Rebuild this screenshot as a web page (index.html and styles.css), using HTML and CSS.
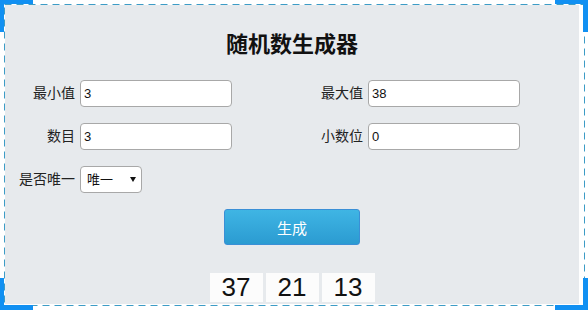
FILE: index.html
```html
<!DOCTYPE html>
<html>
  <head>
    <meta charset="utf-8">
    <title>随机数生成器</title>
    <link rel="stylesheet" href="styles.css">
  </head>
  <body>
    <div class="stage">
      <div class="panel">
        <h1 class="title">随机数生成器</h1>

        <div class="fields">
          <label class="field">
            <span class="field-label">最小值</span>
            <input class="field-input" value="3">
          </label>
          <label class="field">
            <span class="field-label">最大值</span>
            <input class="field-input" value="38">
          </label>
          <label class="field">
            <span class="field-label">数目</span>
            <input class="field-input" value="3">
          </label>
          <label class="field">
            <span class="field-label">小数位</span>
            <input class="field-input" value="0">
          </label>
          <label class="field">
            <span class="field-label">是否唯一</span>
            <span class="select-wrap">
              <select class="field-select">
                <option>唯一</option>
                <option>不唯一</option>
              </select>
            </span>
          </label>
        </div>

        <button class="generate">生成</button>

        <div class="results">
          <span class="result">37</span>
          <span class="result">21</span>
          <span class="result">13</span>
        </div>
      </div>

      <!-- selection frame drawn over the panel -->
      <svg class="outline" width="588" height="310">
        <rect x="4.5" y="4.5" width="580" height="301" fill="none" stroke="#3d9cc6" stroke-width="1" stroke-dasharray="7 5"/>
      </svg>
      <span class="corner corner-tl"></span>
      <span class="corner corner-tr"></span>
      <span class="corner corner-bl"></span>
      <span class="corner corner-br"></span>
    </div>
  </body>
</html>
```

FILE: styles.css
```css
body { margin: 0; background: #fff; font-family: "Liberation Sans", "Noto Sans CJK SC", sans-serif; color: #222; }

.stage { position: relative; width: 588px; height: 310px; box-sizing: border-box; padding: 5px 9px 6px 5px; }
.panel { height: 100%; background: #e7eaed; display: flex; flex-direction: column; }

.title { margin: 0; padding-top: 27px; font-size: 22px; line-height: 26px; font-weight: bold; text-align: center; color: #111; }

.fields { margin-top: 22px; display: grid; grid-template-columns: 288px 1fr; row-gap: 16px; }
.field { display: flex; align-items: center; gap: 5px; }
.field-label { width: 70px; text-align: right; font-size: 14px; line-height: 27px; }
.field-input { width: 152px; height: 27px; box-sizing: border-box; border: 1px solid #a8a8a8; border-radius: 4px; padding: 0 3px; font: 13px "Liberation Sans", "Noto Sans CJK SC", sans-serif; color: #111; background: #fff; }
.field-input:focus { outline: none; }

.select-wrap { position: relative; display: block; width: 62px; height: 27px; }
.select-wrap::after { content: ""; position: absolute; right: 6px; top: 11px; border-left: 3px solid transparent; border-right: 3px solid transparent; border-top: 5px solid #111; pointer-events: none; }
.field-select { appearance: none; -webkit-appearance: none; width: 100%; height: 100%; box-sizing: border-box; border: 1px solid #a8a8a8; border-radius: 4px; padding: 0 0 0 6px; background: #fff; font: 13px "Liberation Sans", "Noto Sans CJK SC", sans-serif; color: #111; }

.generate { align-self: center; margin-top: 16px; width: 136px; height: 36px; border: 1px solid #3a8fd6; border-radius: 3px; background: linear-gradient(#3fb5e4, #2b9bd1); color: #fff; font: 15px "Liberation Sans", "Noto Sans CJK SC", sans-serif; }

.results { margin-top: 28px; display: flex; justify-content: center; gap: 3px; }
.result { min-width: 53px; height: 29px; box-sizing: border-box; padding: 0 12px; background: #fcfcfc; font-size: 26px; line-height: 29px; text-align: center; color: #111; }

.outline { position: absolute; left: 0; top: 0; pointer-events: none; }

.corner { position: absolute; width: 33px; height: 32px; box-sizing: border-box; border: 0 solid #1190f2; }
.corner-tl { left: 0; top: 0; border-top-width: 4px; border-left-width: 4px; }
.corner-tr { right: 0; top: 0; border-top-width: 4px; border-right-width: 5px; }
.corner-bl { left: 0; bottom: 0; border-bottom-width: 5px; border-left-width: 4px; }
.corner-br { right: 0; bottom: 0; border-bottom-width: 5px; border-right-width: 5px; }
```
